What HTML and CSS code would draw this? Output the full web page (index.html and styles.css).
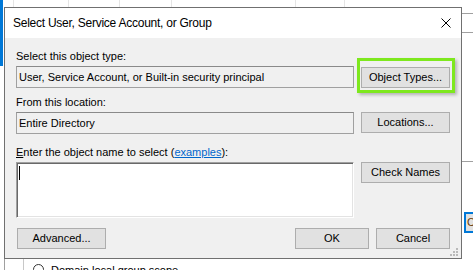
FILE: index.html
```html
<!DOCTYPE html>
<html lang="en">
  <head>
    <meta charset="UTF-8" />
    <meta name="viewport" content="width=device-width, initial-scale=1.0" />
    <title>Select User, Service Account, or Group</title>
    <link rel="stylesheet" href="styles.css">
  </head>

  <body>
    <div class="desk">
      <!-- window behind the dialog -->
      <div class="bg-head">
        <span class="cell" style="width: 14px"></span>
        <span class="cell" style="width: 55px"></span>
        <span class="cell" style="width: 51px"></span>
        <span class="cell" style="width: 52px"></span>
        <span class="cell" style="width: 124px"></span>
        <span class="cell" style="width: 49px"></span>
      </div>
      <div class="bg-left"></div>
      <div class="bg-right">
        <div class="line" style="top: 13px"></div>
        <div class="line" style="top: 32px"></div>
        <div class="line" style="top: 161px"></div>
        <div class="peek-btn">C</div>
      </div>
      <div class="bg-bottom">
        <span class="radio"></span>
        <span>Domain local group scope</span>
      </div>

      <div class="dialog">
        <div class="titlebar">
          <span class="title">Select User, Service Account, or Group</span>
          <svg class="close" width="10" height="10" viewBox="0 0 10 10">
            <path d="M0.5 0.5 L9.5 9.5 M9.5 0.5 L0.5 9.5" stroke="#000" stroke-width="1" fill="none" />
          </svg>
        </div>

        <div class="content">
          <div class="form">
            <label class="label">Select this object type:</label>
            <span></span>
            <div class="field">User, Service Account, or Built-in security principal</div>
            <button class="btn btn-types">Object Types...</button>

            <label class="label label-gap">From this location:</label>
            <span></span>
            <div class="field">Entire Directory</div>
            <button class="btn">Locations...</button>

            <label class="label label-gap-lg"><u>E</u>nter the object name to select (<a href="#">examples</a>):</label>
            <span></span>
            <div class="names"><span class="caret"></span></div>
            <button class="btn">Check Names</button>
          </div>

          <div class="footer">
            <button class="btn btn-wide">Advanced...</button>
            <div class="spacer"></div>
            <button class="btn btn-small">OK</button>
            <button class="btn btn-small">Cancel</button>
          </div>
        </div>

        <svg class="grip" width="8" height="8" viewBox="0 0 8 8">
          <rect x="6" y="0" width="2" height="2" fill="#b9b9b9" />
          <rect x="3" y="3" width="2" height="2" fill="#b9b9b9" />
          <rect x="6" y="3" width="2" height="2" fill="#b9b9b9" />
          <rect x="0" y="6" width="2" height="2" fill="#b9b9b9" />
          <rect x="3" y="6" width="2" height="2" fill="#b9b9b9" />
          <rect x="6" y="6" width="2" height="2" fill="#b9b9b9" />
        </svg>
      </div>

      <!-- screenshot annotation -->
      <div class="highlight"></div>
    </div>
  </body>
</html>
```

FILE: styles.css
```css
body {
  margin: 0;
  font-family: "Liberation Sans", Arial, sans-serif;
  font-size: 11px;
  color: #000;
  background: #fff;
}

.desk {
  position: relative;
  width: 473px;
  height: 270px;
  overflow: hidden;
  background: #fff;
}

/* background window */
.bg-head {
  position: absolute;
  left: 0;
  top: 0;
  height: 7px;
  display: flex;
}

.bg-head .cell {
  height: 7px;
  box-sizing: border-box;
  border-right: 1px solid #e5e5e5;
}

.bg-left {
  position: absolute;
  left: 0;
  top: 0;
  width: 3px;
  height: 66px;
  background: #0078d7;
}

.bg-right {
  position: absolute;
  left: 462px;
  top: 0;
  width: 11px;
  height: 270px;
}

.bg-right .line {
  position: absolute;
  left: 0;
  width: 11px;
  height: 1px;
  background: #a0a0a0;
}

.peek-btn {
  position: absolute;
  left: 2px;
  top: 212px;
  width: 20px;
  height: 21px;
  box-sizing: border-box;
  border: 2px solid #0078d7;
  background: #e1e1e1;
  color: #6b3a00;
  line-height: 17px;
  padding-left: 1px;
}

.bg-bottom {
  position: absolute;
  left: 4px;
  top: 259px;
  width: 469px;
  height: 11px;
  box-sizing: border-box;
  border-left: 1px solid #a0a0a0;
  display: flex;
  align-items: flex-start;
  gap: 7px;
  padding-left: 28px;
  padding-top: 5px;
  font-size: 11px;
}

.bg-bottom::before {
  content: "";
  position: absolute;
  left: 18px;
  top: 0;
  width: 1px;
  height: 11px;
  background: #c8c8c8;
}

.radio {
  width: 11px;
  height: 11px;
  box-sizing: border-box;
  border: 1px solid #333;
  border-radius: 50%;
  flex: none;
}

/* dialog */
.dialog {
  position: absolute;
  left: 4px;
  top: 7px;
  width: 458px;
  height: 252px;
  box-sizing: border-box;
  border: 1px solid #707070;
  background: #f0f0f0;
  display: flex;
  flex-direction: column;
}

.titlebar {
  height: 30px;
  flex: none;
  background: #fff;
  display: flex;
  align-items: center;
  justify-content: space-between;
  padding-left: 8px;
  padding-right: 10px;
}

.title {
  font-size: 12px;
  line-height: 16px;
  letter-spacing: -0.25px;
}

.close {
  display: block;
  margin-top: -1px;
}

.content {
  flex: 1;
  padding: 12px 11px 9px 11px;
  display: flex;
  flex-direction: column;
}

.form {
  display: grid;
  grid-template-columns: 338px 89px;
  column-gap: 7px;
  align-items: start;
}

.label {
  line-height: 13px;
  margin-bottom: 3px;
  white-space: nowrap;
}

.label-gap {
  margin-top: 8px;
}

.label-gap-lg {
  margin-top: 12px;
}

.label a {
  color: #0066cc;
}

.field {
  height: 22px;
  box-sizing: border-box;
  border: 1px solid #a0a0a0;
  border-top-color: #8a8a8a;
  line-height: 20px;
  padding-left: 2px;
  white-space: nowrap;
  overflow: hidden;
}

.names {
  height: 56px;
  box-sizing: border-box;
  background: #fff;
  border: 1px solid;
  border-color: #a0a0a0 #ffffff #ffffff #a0a0a0;
  box-shadow: inset 1px 1px 0 #696969, inset -1px -1px 0 #e3e3e3;
  padding: 3px 0 0 2px;
}

.caret {
  display: block;
  width: 1px;
  height: 14px;
  background: #000;
}

.btn {
  height: 21px;
  box-sizing: border-box;
  border: 1px solid #adadad;
  background: #e1e1e1;
  font-family: inherit;
  font-size: 11px;
  color: #000;
  padding: 0;
  line-height: 19px;
  text-align: center;
}

.btn-types {
  margin-top: 1px;
}

.footer {
  display: flex;
  gap: 7px;
  margin-top: 10px;
  padding-left: 1px;
}

.spacer {
  flex: 1;
}

.btn-wide {
  width: 89px;
}

.btn-small {
  width: 74px;
}

.grip {
  position: absolute;
  right: 3px;
  bottom: 2px;
}

.highlight {
  position: absolute;
  left: 357px;
  top: 58px;
  width: 98px;
  height: 35px;
  box-sizing: border-box;
  border: 3px solid #7ee81e;
  box-shadow: 2px 2px 3px rgba(0, 0, 0, 0.25);
}
```
